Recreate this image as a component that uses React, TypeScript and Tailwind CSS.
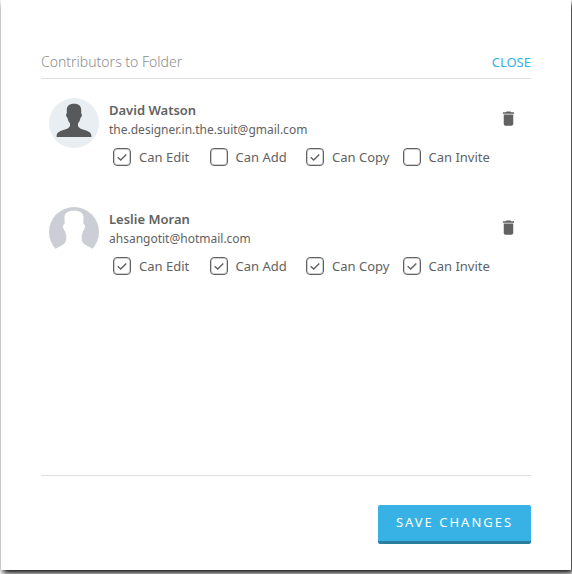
import { useState } from 'react';
import { MdDelete } from 'react-icons/md';

const PERMISSIONS = ['Can Edit', 'Can Add', 'Can Copy', 'Can Invite'];

const CONTRIBUTORS = [
  {
    name: 'David Watson',
    email: 'the.designer.in.the.suit@gmail.com',
    avatar: 'dark',
    granted: ['Can Edit', 'Can Copy'],
  },
  {
    name: 'Leslie Moran',
    email: 'ahsangotit@hotmail.com',
    avatar: 'light',
    granted: ['Can Edit', 'Can Add', 'Can Copy', 'Can Invite'],
  },
];

function Avatar({ kind }: { kind: string }) {
  if (kind === 'dark') {
    return (
      <svg viewBox="0 0 50 50" className="size-[50px] shrink-0" aria-hidden="true">
        <circle cx="25" cy="25" r="25" fill="#e8eef1" />
        <path
          fill="#58595b"
          d="M25 5.700C20 5.700 17.600 8 17.800 12.500V15.500C17 15.700 17 17 17.300 18C17.600 19.100 18 19.600 18.500 19.700C18.900 22 19.700 23.900 21 25.300V28C20.300 30 17.800 31 14.500 32C10 33.400 7.600 34.600 7.600 38.200V39H42.400V38.200C42.400 34.600 40 33.400 35.500 32C32.200 31 29.700 30 29 28V25.300C30.300 23.900 31.100 22 31.500 19.700C32 19.600 32.400 19.100 32.700 18C33 17 33 15.700 32.200 15.500V12.500C32.400 8 30 5.700 25 5.700Z"
        />
      </svg>
    );
  }
  return (
    <svg viewBox="0 0 50 50" className="size-[50px] shrink-0" aria-hidden="true">
      <circle cx="25" cy="25" r="25" fill="#cbced5" />
      <path
        fill="#fff"
        d="M25 3.700C18.500 3.700 15.300 6 15.500 11L15.700 17C14.200 17.300 13.800 18.500 14.200 20.500C14.600 22.500 15.100 23.500 16 23.800C16.300 25.500 16.700 27 17.300 28.500V33C16.500 36.500 13.500 38 10.500 39.500C8 40.700 6.500 41.800 5.500 43L0 51H50L44.500 43C43.500 41.800 42 40.700 39.500 39.500C36.500 38 33.500 36.500 32.700 33V28.500C33.300 27 33.700 25.500 34 23.800C34.900 23.500 35.400 22.500 35.800 20.500C36.200 18.500 35.800 17.300 34.300 17L34.500 11C34.700 6 31.500 3.700 25 3.700Z"
      />
    </svg>
  );
}

function Permission({ label, defaultChecked }: { label: string; defaultChecked: boolean }) {
  const [checked, setChecked] = useState(defaultChecked);
  return (
    <label className="flex cursor-pointer items-center gap-2 text-[13px] leading-5 whitespace-nowrap">
      <span className="grid size-[18px] shrink-0 place-items-center">
        <input
          type="checkbox"
          checked={checked}
          onChange={(e) => setChecked(e.target.checked)}
          className="col-start-1 row-start-1 size-[18px] cursor-pointer appearance-none rounded border border-[#626262] ring-1 ring-[#626262]/30 ring-inset"
        />
        {checked && (
          <svg
            viewBox="0 0 18 18"
            className="pointer-events-none col-start-1 row-start-1 size-[18px]"
            fill="none"
            stroke="#626262"
            strokeWidth="1.4"
            aria-hidden="true"
          >
            <path d="M4.700 9.300l3 2.800 5.600-5.700" />
          </svg>
        )}
      </span>
      {label}
    </label>
  );
}

export default function App() {
  return (
    <div className="flex min-h-screen flex-col overflow-hidden bg-white px-px pb-1 font-['Noto_Sans',sans-serif] text-[#626262]">
      <main className="flex flex-1 flex-col bg-white px-10 pt-12 pb-[26px] shadow-[2px_3px_6px_#000]">
        {/* Header */}
        <header className="flex h-[31px] items-start justify-between border-b border-[#dedede] pt-1">
          <h1 className="text-sm leading-5 font-light text-[#8c8c8c]">Contributors to Folder</h1>
          <button type="button" className="cursor-pointer text-[13px] leading-5 text-[#35b0e2]">
            CLOSE
          </button>
        </header>

        {/* Contributors */}
        <ul className="flex flex-1 flex-col gap-10 pt-[19px]">
          {CONTRIBUTORS.map((person) => (
            <li key={person.email} className="flex items-start pr-[13px] pl-2">
              <Avatar kind={person.avatar} />
              <div className="min-w-0 flex-1 pt-0.5 pl-[10px]">
                <h2 className="text-[13px] leading-5 font-semibold">{person.name}</h2>
                <p className="text-xs leading-5">{person.email}</p>
                <div className="grid grid-cols-4 pt-[7px] pl-1">
                  {PERMISSIONS.map((label) => (
                    <Permission key={label} label={label} defaultChecked={person.granted.includes(label)} />
                  ))}
                </div>
              </div>
              <button type="button" aria-label={`Remove ${person.name}`} className="cursor-pointer pt-[11px]">
                <MdDelete size={19} />
              </button>
            </li>
          ))}
        </ul>

        {/* Footer */}
        <footer className="flex justify-end border-t border-[#dedede] pt-[29px]">
          <button
            type="button"
            className="h-[39px] w-[153px] cursor-pointer rounded-xs border-b-3 border-[#2a7f9f] bg-[#38b2e5] text-[13px] tracking-[2px] text-white"
          >
            SAVE CHANGES
          </button>
        </footer>
      </main>
    </div>
  );
}
